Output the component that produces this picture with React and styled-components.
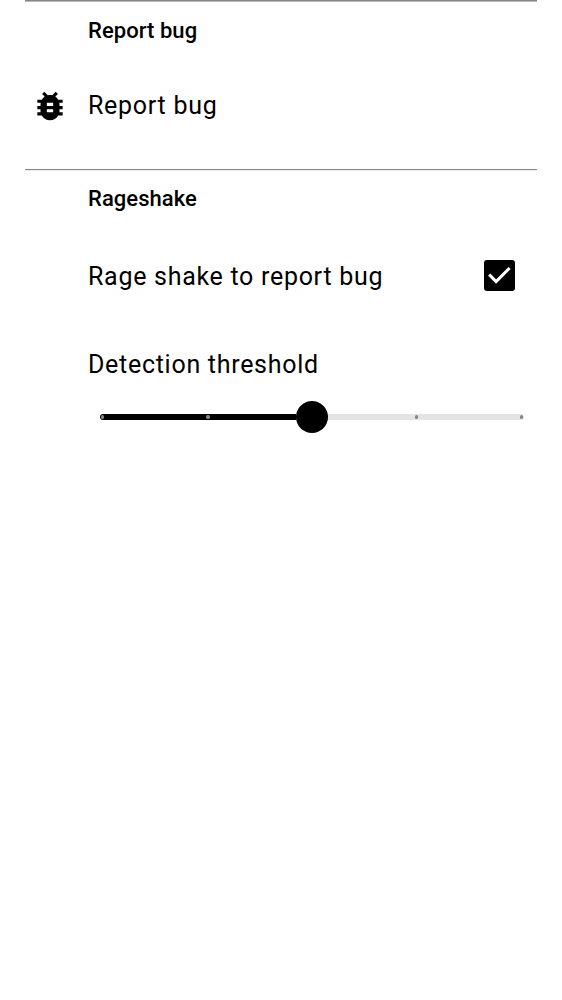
import React from "react";
import styled, { createGlobalStyle } from "styled-components";

const Global = createGlobalStyle`
  body { margin: 0; background: #fff; color: #000; font-family: Roboto, sans-serif; }
`;
const Page = styled.main`
  box-sizing: border-box;
  width: 562px;
  min-height: 1000px;
  padding: 0 25px;
`;
const Section = styled.section`
  box-sizing: border-box;
  height: ${(p) => p.$height}px;
  border-top: 1px solid #85858a;
  box-shadow: inset 0 1px 0 ${(p) => p.$edge};
`;
const Heading = styled.h2`
  margin: 0;
  padding: ${(p) => p.$top}px 0 0 63px;
  font-size: 22px;
  line-height: 28px;
  font-weight: 500;
  letter-spacing: 0.05px;
`;
const Row = styled.div`
  display: flex;
  align-items: center;
  height: 32px;
  margin-top: ${(p) => p.$gap}px;
  padding: 0 22px 0 ${(p) => (p.$icon ? 6 : 63)}px;
`;
const Label = styled.span`
  flex: 1;
  font-size: 25px;
  line-height: 32px;
  letter-spacing: 0.71px;
  white-space: nowrap;
`;
const BugIcon = styled.svg`
  flex: none;
  width: 38px;
  height: 38px;
  margin-right: 19px;
`;
const Box = styled.span`
  display: flex;
  width: 31px;
  height: 31px;
  margin-bottom: 4px;
  border-radius: 3px;
  background: #000;
`;
const Slider = styled.div`
  display: flex;
  align-items: center;
  height: 32px;
  margin: 20px 13px 0 75px;
`;
const Track = styled.div`
  box-sizing: border-box;
  flex: ${(p) => p.$grow} 1 0;
  display: flex;
  justify-content: space-between;
  align-items: center;
  height: 6px;
  border-radius: ${(p) => (p.$active ? "3px 0 0 3px" : "0 3px 3px 0")};
  background: ${(p) => (p.$active ? "#000" : "#e4e4e8")};
  padding: ${(p) => (p.$active ? "0 86.5px 0 1px" : "0 1px 0 86.5px")};
`;
const Tick = styled.i`
  width: 3.4px;
  height: 3.4px;
  border-radius: 50%;
  background: #858585;
`;
const Thumb = styled.div`
  width: 32px;
  height: 32px;
  border-radius: 50%;
  background: #000;
`;

export default function App() {
  return (
    <Page>
      <Global />
      <Section $height={169} $edge="#bcbcc0">
        <Heading $top={15.5}>Report bug</Heading>
        <Row $gap={45.5} $icon>
          <BugIcon viewBox="0 0 24 24">
            <path d="M20 8h-2.81c-.45-.78-1.07-1.45-1.82-1.96L17 4.41 15.59 3l-2.17 2.17C12.96 5.06 12.49 5 12 5s-.96.06-1.41.17L8.41 3 7 4.41l1.62 1.63C7.88 6.55 7.26 7.22 6.81 8H4v2h2.09c-.05.33-.09.66-.09 1v1H4v2h2v1c0 .34.04.67.09 1H4v2h2.81c1.04 1.79 2.97 3 5.19 3s4.15-1.21 5.19-3H20v-2h-2.09c.05-.33.09-.66.09-1v-1h2v-2h-2v-1c0-.34-.04-.67-.09-1H20V8zm-6 8h-4v-2h4v2zm0-4h-4v-2h4v2z" />
          </BugIcon>
          <Label>Report bug</Label>
        </Row>
      </Section>
      <Section $height={300} $edge="#ececee">
        <Heading $top={15}>Rageshake</Heading>
        <Row $gap={48}>
          <Label>Rage shake to report bug</Label>
          <Box>
            <svg width="31" height="31" viewBox="0 0 31 31" fill="none" stroke="#fff" strokeWidth="3.1">
              <path d="M5.2 14.6l6.9 6.9L25.6 8" />
            </svg>
          </Box>
        </Row>
        <Row $gap={56}>
          <Label>Detection threshold</Label>
        </Row>
        <Slider>
          <Track $active $grow={1}>
            <Tick />
            <Tick />
          </Track>
          <Thumb />
          <Track $grow={1}>
            <Tick />
            <Tick />
          </Track>
        </Slider>
      </Section>
    </Page>
  );
}
